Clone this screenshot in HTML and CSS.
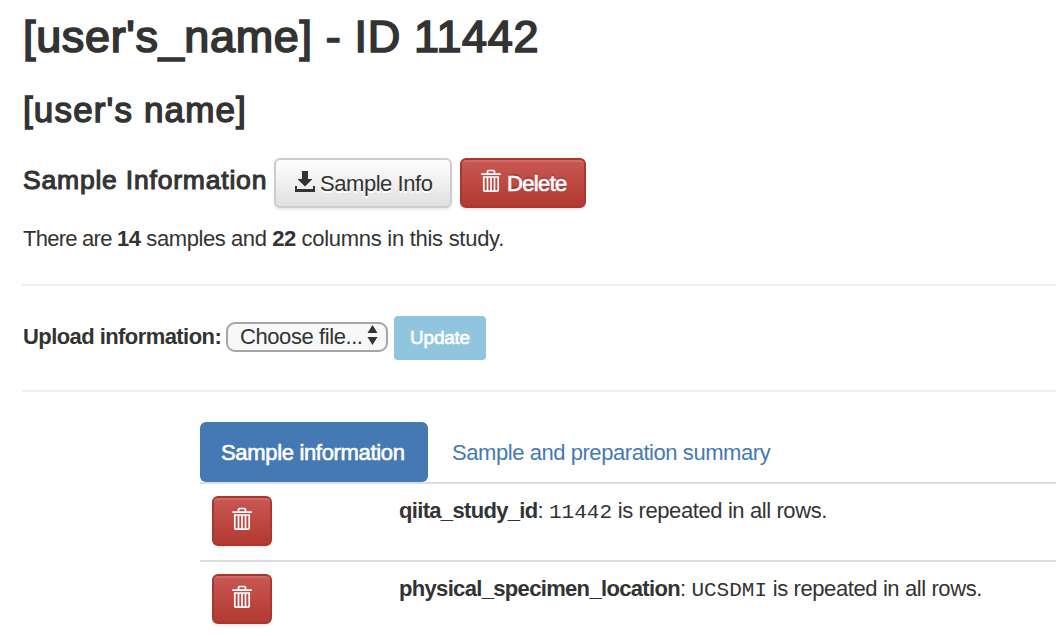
FILE: index.html
```html
<!DOCTYPE html>
<html lang="en">
<head>
<meta charset="utf-8">
<title>Study 11442</title>
<link rel="stylesheet" href="styles.css">
</head>
<body>
<svg class="sprite" aria-hidden="true">
  <symbol id="trash" viewBox="0 0 20 24">
    <path d="M.2 5.2h19.6M6.5 4.7V2.6Q6.5 1.5 7.600 1.5h4.8q1.1 0 1.1 1.1v2.1M2.8 8h14.4v13.1q0 1.1-1.1 1.1H3.9q-1.1 0-1.1-1.1zM6.5 8v14M10 8v14M13.5 8v14" fill="none" stroke="currentColor" stroke-width="1.7"/>
  </symbol>
</svg>
<main class="page">
  <h1 class="title">[user's_name] - ID 11442</h1>
  <h2 class="subtitle">[user's name]</h2>
  <div class="toolbar">
    <h3 class="section">Sample Information</h3>
    <button class="btn btn-default"><svg class="download" viewBox="0 0 20 22"><path d="M7 0h6v8h4.5L10 15.5 2.500 8H7zM0 15h2v3h16v-3h2v6H0z" fill="currentColor"/></svg><span class="info">Sample Info</span></button>
    <button class="btn btn-danger wide"><svg class="trash"><use href="#trash"/></svg><span class="del">Delete</span></button>
  </div>
  <p class="counts"><span class="lead">There are </span><b>14</b> samples and <b>22</b> <span class="tail">columns in this study.</span></p>
  <hr class="rule">
  <div class="upload">
    <label class="upload-label" for="file">Upload information:</label>
    <div class="picker">
      <select id="file" class="select"><option>Choose file...</option></select>
      <svg class="arrows" viewBox="0 0 10 20"><path d="M5 0l5 8H0zM0 12h10l-5 8z" fill="#333"/></svg>
    </div>
    <button class="update">Update</button>
  </div>
  <hr class="rule">
  <section class="panel">
    <nav class="tabs">
      <a class="tab active">Sample information</a>
      <a class="tab summary">Sample and preparation summary</a>
    </nav>
    <div class="row">
      <button class="btn btn-danger small"><svg class="trash"><use href="#trash"/></svg></button>
      <p class="detail"><b>qiita_study_id</b>: <code>11442</code> is repeated in all rows.</p>
    </div>
    <div class="row">
      <button class="btn btn-danger small"><svg class="trash"><use href="#trash"/></svg></button>
      <p class="detail"><b>physical_specimen_location</b>: <code>UCSDMI</code> is repeated in all rows.</p>
    </div>
  </section>
</main>
</body>
</html>
```
FILE: styles.css
```css
* { box-sizing: border-box; }
body {
  margin: 0;
  background: #fff;
  color: #333;
  font: 22px/30px "Liberation Sans", Arial, sans-serif;
  overflow: hidden;
  white-space: nowrap;
}
h1, h2, h3, p { margin: 0; font-weight: 400; }
button, select { font: inherit; color: inherit; margin: 0; white-space: nowrap; }
.sprite { position: absolute; width: 0; height: 0; }
.page { width: 1056px; height: 636px; padding: 11px 0 0 22px; overflow: hidden; }
.title { padding-left: 1px; font-size: 45px; line-height: 51px; height: 50px; letter-spacing: .65px; -webkit-text-stroke: 1.7px #333; }
.subtitle { margin-top: 29px; padding-left: 1px; font-size: 35px; line-height: 39px; height: 40px; letter-spacing: 1.15px; -webkit-text-stroke: 1.4px #333; }
.toolbar { display: flex; margin-top: 28px; height: 50px; }
.section { width: 252px; padding-left: 1px; font-size: 26.5px; line-height: 45px; letter-spacing: .8px; -webkit-text-stroke: 1.1px #333; }
.btn {
  display: flex;
  align-items: center;
  height: 50px;
  padding: 0;
  border: 2px solid #ccc;
  border-radius: 6px;
}
.btn-default {
  width: 178px;
  padding-left: 19px;
  background: linear-gradient(#fff, #e0e0e0);
  box-shadow: 0 2px 2px rgba(0, 0, 0, .075);
  text-shadow: 0 2px 0 #fff;
}
.btn-danger {
  color: #fff;
  border-color: #a93730;
  background: linear-gradient(#c95853, #b23a31);
  box-shadow: inset 0 2px 0 rgba(255, 255, 255, .12), 0 2px 2px rgba(0, 0, 0, .075);
  text-shadow: 0 -2px 0 rgba(0, 0, 0, .2);
}
.wide { width: 126px; margin-left: 8px; padding-left: 19px; }
.small { width: 60px; margin: 12px 0 0 12px; justify-content: center; }
.download { width: 20px; height: 22px; margin: 0 5px 3px 0; }
.trash { width: 20px; height: 24px; margin-bottom: 5px; }
.wide .trash { margin-right: 6px; }
.info, .del { padding-top: 2px; }
.info { letter-spacing: -.45px; }
.del { letter-spacing: -.65px; -webkit-text-stroke: .6px #fff; }
.counts { margin-top: 15px; padding-left: 1px; line-height: 31px; letter-spacing: -.42px; }
.lead { letter-spacing: -.75px; }
.tail { letter-spacing: -.28px; }
.rule { margin: 30px 0 0; border: 0; height: 2px; background: #eee; }
.upload { display: flex; height: 74px; margin-top: 30px; }
.upload + .rule { margin-top: 0; }
.upload-label { width: 204px; padding-left: 1px; font-weight: 700; line-height: 41px; letter-spacing: -.57px; }
.picker { position: relative; width: 162px; height: 30px; margin-top: 6px; }
.select {
  appearance: none;
  width: 162px;
  height: 30px;
  padding: 0 0 0 12px;
  line-height: 26px;
  letter-spacing: -.42px;
  border: 2px solid #a6a6a6;
  border-radius: 9px;
  background: #f8f8f8;
}
.arrows { position: absolute; right: 10px; top: 3px; width: 11px; height: 20px; }
.update {
  width: 92px;
  height: 44px;
  margin-left: 6px;
  padding: 0;
  border: 0;
  border-radius: 4px;
  background: #91c5de;
  color: #fff;
  font-size: 19px;
  letter-spacing: -.25px;
  -webkit-text-stroke: .6px #fff;
}
.panel { margin: 30px 0 0 178px; }
.tabs { display: flex; height: 60px; line-height: 61px; }
.tab.active {
  width: 228px;
  padding-left: 21px;
  border-radius: 6px;
  background: #4579b4;
  color: #fff;
  letter-spacing: -.33px;
  -webkit-text-stroke: .6px #fff;
}
.summary { margin-left: 24px; color: #4579b4; letter-spacing: -.44px; }
.row { display: flex; height: 78px; border-top: 2px solid #ddd; }
.detail { margin: 12px 0 0 127px; line-height: 30px; letter-spacing: -.4px; }
.detail b { letter-spacing: -.67px; }
code { font: 21px/30px "Liberation Mono", "Courier New", monospace; letter-spacing: 0; }
```
